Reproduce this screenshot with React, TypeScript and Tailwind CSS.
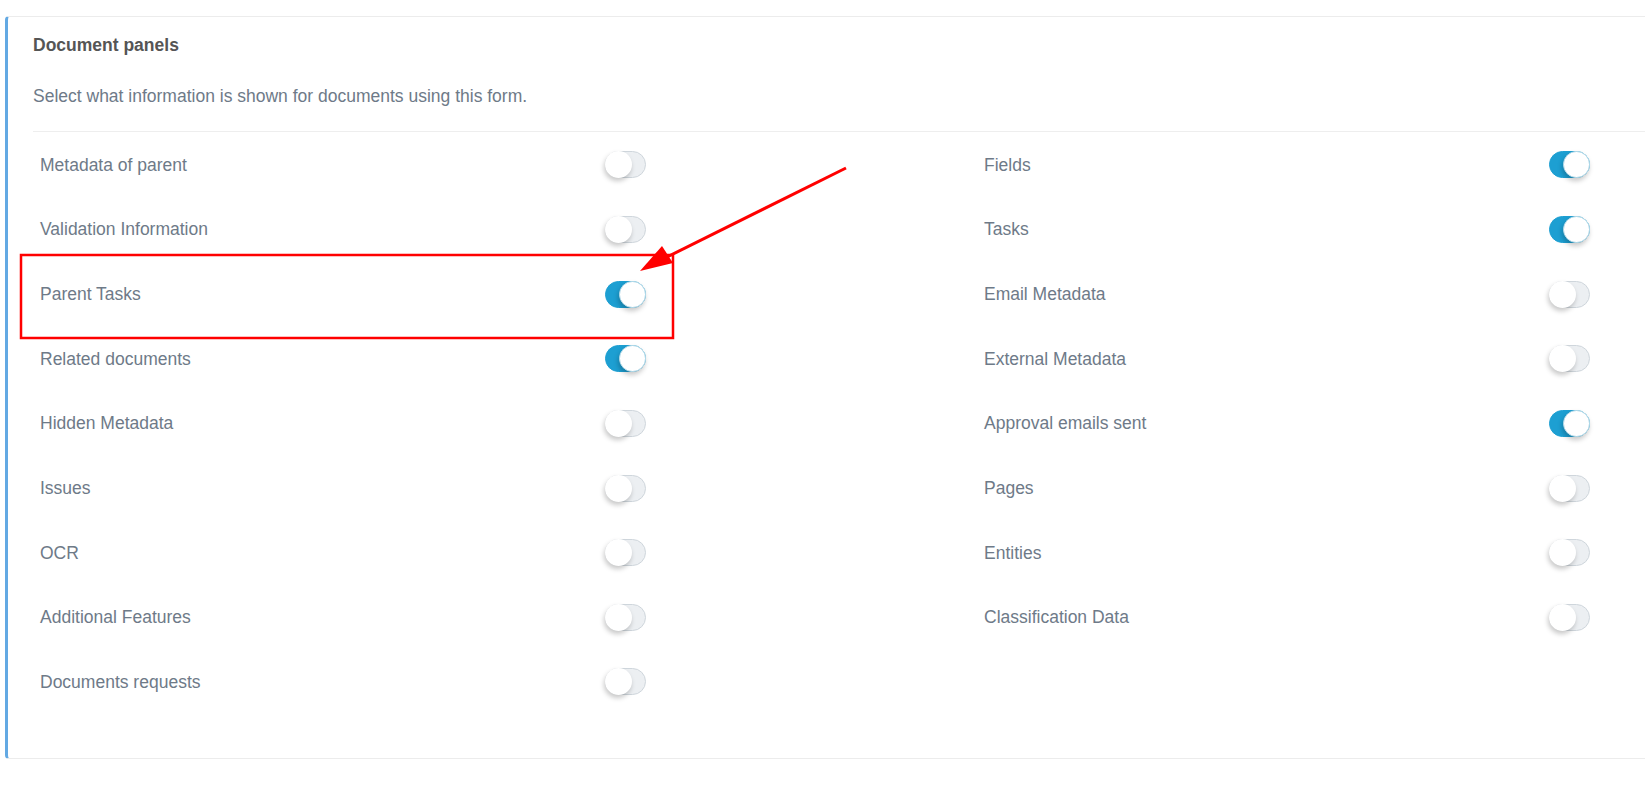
import { useState } from "react";

type Panel = { label: string; on: boolean };

const leftPanels: Panel[] = [
  { label: "Metadata of parent", on: false },
  { label: "Validation Information", on: false },
  { label: "Parent Tasks", on: true },
  { label: "Related documents", on: true },
  { label: "Hidden Metadata", on: false },
  { label: "Issues", on: false },
  { label: "OCR", on: false },
  { label: "Additional Features", on: false },
  { label: "Documents requests", on: false },
];

const rightPanels: Panel[] = [
  { label: "Fields", on: true },
  { label: "Tasks", on: true },
  { label: "Email Metadata", on: false },
  { label: "External Metadata", on: false },
  { label: "Approval emails sent", on: true },
  { label: "Pages", on: false },
  { label: "Entities", on: false },
  { label: "Classification Data", on: false },
];

function Toggle({ initial }: { initial: boolean }) {
  const [on, setOn] = useState(initial);
  return (
    <button
      onClick={() => setOn(!on)}
      className={`relative w-[41px] h-[27px] rounded-full border ${
        on ? "bg-[#1d9fd2] border-[#1d9fd2]" : "bg-[#eceff2] border-[#cfd6dc]"
      }`}
    >
      <span
        className={`absolute top-[-1px] w-[27px] h-[27px] rounded-full bg-white shadow-[-1px_3px_5px_rgba(0,0,0,0.22)] ${
          on ? "left-[13px] border border-[#b9dcea]" : "left-[-1px]"
        }`}
      />
    </button>
  );
}

function PanelColumn({ items }: { items: Panel[] }) {
  return (
    <div className="flex flex-col w-[944px] shrink-0">
      {items.map((p) => (
        <div key={p.label} className="flex items-center h-[64.65px]">
          <div className="w-[572px] shrink-0 pl-[7px] text-[17.5px] text-[#6e7a88]">{p.label}</div>
          <Toggle initial={p.on} />
        </div>
      ))}
    </div>
  );
}

export default function App() {
  return (
    <div
      className="relative min-h-screen w-[1645px] h-[787px] overflow-hidden bg-white pt-[16px]"
      style={{ fontFamily: '"Liberation Sans", Arial, sans-serif' }}
    >
      <div className="ml-[5px] w-[2000px] h-[743px] bg-white border border-[#ececec] border-l-[3px] border-l-[#63a9e3] rounded-l-[4px] pl-[25px] pt-[15.5px]">
        <h2 className="text-[17.5px] leading-[25px] font-bold text-[#555]">Document panels</h2>
        <p className="mt-[26px] text-[17.5px] leading-[25px] text-[#6e7a88]">
          Select what information is shown for documents using this form.
        </p>
        <div className="mt-[22px] border-t border-[#eeeeee] pt-[1px]" />
        <div className="flex">
          <PanelColumn items={leftPanels} />
          <PanelColumn items={rightPanels} />
        </div>
      </div>

      {/* annotation overlay */}
      <svg className="absolute inset-0 pointer-events-none" width="1645" height="787">
        <rect x="21" y="255" width="652" height="83" fill="none" stroke="#ff0000" strokeWidth="2.5" />
        <line x1="846" y1="168" x2="664" y2="258.5" stroke="#ff0000" strokeWidth="3" />
        <polygon points="640,271 673,263 662,246" fill="#ff0000" />
      </svg>
    </div>
  );
}
